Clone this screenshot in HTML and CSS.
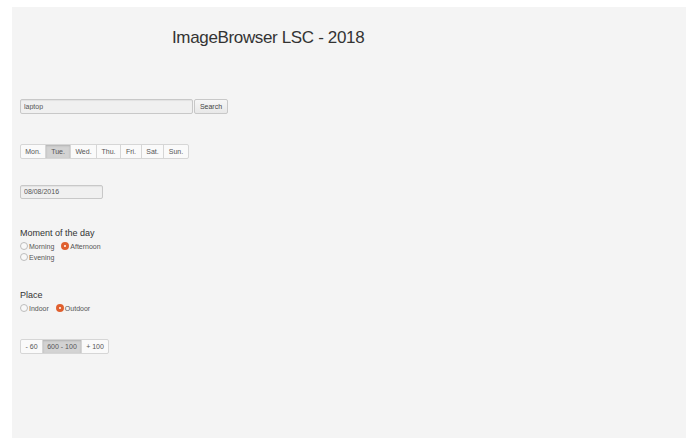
FILE: index.html
```html
<!DOCTYPE html>
<html>
<head>
<meta charset="utf-8">
<title>ImageBrowser LSC - 2018</title>
<link rel="stylesheet" href="styles.css">
</head>
<body>
<div class="panel">
  <h1 class="title">ImageBrowser LSC - 2018</h1>

  <form class="search-row">
    <input class="text-input search-input" type="text" value="laptop">
    <button class="btn" type="button">Search</button>
  </form>

  <div class="btn-group days">
    <span class="seg">Mon.</span>
    <span class="seg active">Tue.</span>
    <span class="seg">Wed.</span>
    <span class="seg">Thu.</span>
    <span class="seg">Fri.</span>
    <span class="seg">Sat.</span>
    <span class="seg">Sun.</span>
  </div>

  <div class="date-row">
    <input class="text-input date-input" type="text" value="08/08/2016">
  </div>

  <section class="group moment">
    <h2 class="group-title">Moment of the day</h2>
    <div class="radio-line">
      <span class="radio"><span class="dot"></span>Morning</span>
      <span class="radio checked"><span class="dot"></span>Afternoon</span>
    </div>
    <div class="radio-line">
      <span class="radio"><span class="dot"></span>Evening</span>
    </div>
  </section>

  <section class="group place">
    <h2 class="group-title">Place</h2>
    <div class="radio-line">
      <span class="radio"><span class="dot"></span>Indoor</span>
      <span class="radio checked"><span class="dot"></span>Outdoor</span>
    </div>
  </section>

  <div class="btn-group range">
    <span class="seg">- 60</span>
    <span class="seg active">600 - 100</span>
    <span class="seg">+ 100</span>
  </div>
</div>
</body>
</html>
```

FILE: styles.css
```css
html, body {
  margin: 0;
  padding: 0;
  background: #ffffff;
}

body {
  font-family: "Liberation Sans", Arial, sans-serif;
  color: #333333;
}

.panel {
  margin: 7px 3px 0 12px;
  height: 431px;
  background: #f4f4f4;
  padding: 0 8px;
  box-sizing: border-box;
  overflow: hidden;
}

.title {
  margin: 0;
  padding: 20px 0 0 152px;
  font-size: 17px;
  font-weight: normal;
  line-height: 22px;
  letter-spacing: -0.35px;
  color: #333333;
}

.search-row {
  display: flex;
  align-items: center;
  margin: 50px 0 0 0;
  gap: 1px;
}

.text-input {
  box-sizing: border-box;
  height: 15px;
  border: 1px solid #c8c8c8;
  border-radius: 2px;
  background: #f0f0f0;
  box-shadow: inset 0 1px 1px rgba(0, 0, 0, 0.06);
  font-family: "Liberation Sans", Arial, sans-serif;
  font-size: 7px;
  color: #555555;
  padding: 0 3px;
  margin: 0;
  outline: none;
}

.search-input {
  width: 173px;
}

.btn {
  box-sizing: border-box;
  height: 15px;
  width: 34px;
  border: 1px solid #c8c8c8;
  border-radius: 2px;
  background: linear-gradient(#f6f6f6, #e8e8e8);
  font-family: "Liberation Sans", Arial, sans-serif;
  font-size: 7px;
  color: #444444;
  padding: 0;
  margin: 0;
}

.btn-group {
  display: inline-flex;
  border: 1px solid #d6d6d6;
  border-radius: 2px;
  background: #fafafa;
}

.seg {
  display: flex;
  align-items: center;
  justify-content: center;
  height: 13px;
  font-size: 7px;
  color: #555555;
  border-left: 1px solid #d6d6d6;
  box-sizing: content-box;
}

.seg:first-child {
  border-left: none;
}

.seg.active {
  background: #d3d3d3;
  box-shadow: inset 0 1px 2px rgba(0, 0, 0, 0.15);
}

.days {
  margin-top: 30px;
}

.days .seg { width: 24px; }
.days .seg:nth-child(1) { width: 24px; }
.days .seg:nth-child(3) { width: 25px; }
.days .seg:nth-child(4) { width: 23px; }
.days .seg:nth-child(5) { width: 20px; }
.days .seg:nth-child(6) { width: 21px; }

.date-row {
  margin-top: 21px;
}

.date-input {
  width: 83px;
  height: 14px;
}

.group-title {
  margin: 0;
  font-size: 9px;
  font-weight: normal;
  line-height: 11px;
  color: #333333;
}

.moment {
  margin-top: 29px;
}

.place {
  margin-top: 27px;
}

.radio-line {
  display: flex;
  gap: 7px;
  height: 11px;
  align-items: center;
  margin-top: 0;
}

.group-title + .radio-line {
  margin-top: 2px;
}

.radio {
  display: inline-flex;
  align-items: center;
  font-size: 7px;
  color: #555555;
}

.dot {
  box-sizing: border-box;
  width: 8px;
  height: 8px;
  border-radius: 50%;
  border: 1px solid #bdbdbd;
  background: #f8f8f8;
  margin-right: 1px;
}

.radio.checked .dot {
  border: 3px solid #e0602f;
  background: #ffffff;
}

.range {
  margin-top: 25px;
}

.range .seg:nth-child(1) { width: 21px; }
.range .seg:nth-child(2) { width: 38px; }
.range .seg:nth-child(3) { width: 26px; }
```
